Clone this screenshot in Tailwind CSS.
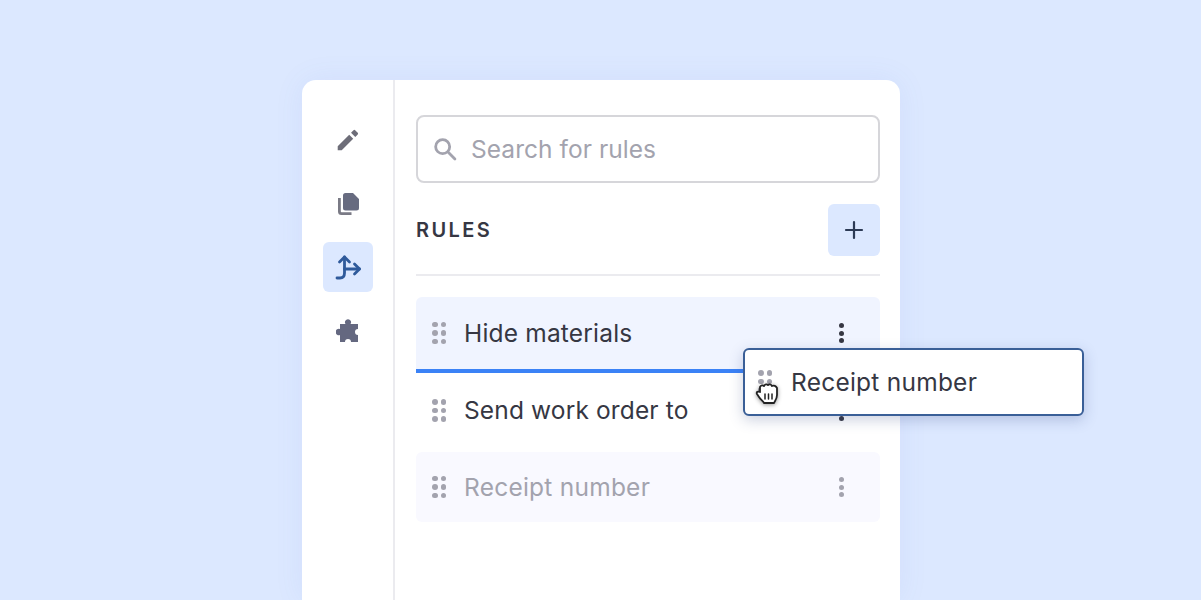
<!DOCTYPE html>
<html lang="en">
<head>
    <meta charset="UTF-8">
    <title>Rules</title>
    <script src="https://cdn.jsdelivr.net/npm/@tailwindcss/browser@4"></script>
</head>
<body class="bg-[#dce8ff] font-[Inter,sans-serif] text-[#363743] h-[600px] w-[1201px] overflow-hidden">
    <div class="relative pt-20 pl-[302px]">
        <!-- Card -->
        <div class="flex w-[598px] h-[520px] bg-white rounded-t-[14px] shadow-[0_0_30px_rgba(90,120,220,0.08)]">
            <!-- Sidebar -->
            <div class="w-[93px] border-r-2 border-[#ebebef] flex flex-col items-center pt-[35px] gap-[13.500px]">
                <div class="w-[50px] h-[50px] flex items-center justify-center">
                    <svg class="w-[26px] h-[26px]" viewBox="0 0 24 24" fill="#6d6d78"><path d="M2.500 17.800V21.500h3.700L16.800 10.900l-3.700-3.700L2.500 17.800zM21 6.900a1.100 1.100 0 0 0 0-1.500l-2.400-2.400a1.100 1.100 0 0 0-1.500 0l-2.300 2.300 3.900 3.900L21 6.900z"/></svg>
                </div>
                <div class="w-[50px] h-[50px] flex items-center justify-center">
                    <svg class="w-[24px] h-[26px]" viewBox="0 0 24 26" fill="#676b80"><path d="M9.500 2h7.500l6 6v9a2.500 2.500 0 0 1-2.500 2.500h-11A2.500 2.500 0 0 1 7 17V4.500A2.500 2.500 0 0 1 9.500 2z"/><path d="M3.400 7v13.500c0 1.200.9 2.100 2.100 2.100H15.500" fill="none" stroke="#7a7a85" stroke-width="2.800"/></svg>
                </div>
                <div class="w-[50px] h-[50px] flex items-center justify-center bg-[#dce8ff] rounded-[6px]">
                    <svg class="w-[28px] h-[28px]" viewBox="0 0 28 28" fill="none" stroke="#2f5a9b" stroke-width="2.800" stroke-linecap="round" stroke-linejoin="round"><path d="M3 25h3c3 0 4.500-2 4.500-5V4"/><path d="M5.500 9l5-5 5 5"/><path d="M10.500 16h15"/><path d="M20.500 11l5 5-5 5"/></svg>
                </div>
                <div class="w-[50px] h-[50px] flex items-center justify-center">
                    <svg class="w-[24px] h-[24px]" viewBox="0 0 24 24" fill="#646880"><path d="M4 5H9.500A3 3 0 1 1 14.500 5H22V10A3 3 0 0 0 22 16V23H15A3 3 0 0 0 9 23H4V16A3.200 3.200 0 1 1 4 10Z"/></svg>
                </div>
            </div>
            <!-- Main -->
            <div class="flex-1 pl-[21px] pr-[20px] pt-[35px]">
                <div class="h-[68px] border-2 border-[#d6d6da] rounded-[8px] flex items-center pl-[13px] gap-[12px]">
                    <svg class="w-[28px] h-[28px]" viewBox="0 0 24 24" fill="none" stroke="#a3a3ae" stroke-width="2.400" stroke-linecap="round"><circle cx="10" cy="10" r="6"/><path d="M15 15l5.500 5.500"/></svg>
                    <span class="text-[24.500px] tracking-[0.05px] pt-[1px] text-[#a3a3ae]">Search for rules</span>
                </div>
                <div class="flex items-center justify-between mt-[21px] pb-[18px] border-b-2 border-[#ebebef]">
                    <span class="text-[20px] font-semibold tracking-[2.400px]">RULES</span>
                    <div class="w-[52px] h-[52px] bg-[#dce8ff] rounded-[6px] flex items-center justify-center">
                        <svg class="w-[20px] h-[20px]" viewBox="0 0 20 20" stroke="#2c3a55" stroke-width="2.200" stroke-linecap="round"><path d="M10 2v16M2 10h16"/></svg>
                    </div>
                </div>
                <div class="mt-[21px] flex flex-col">
                    <div class="h-[72px] bg-[#f0f4ff] rounded-t-[6px] flex items-center pl-[16px] pr-[36px]">
                        <div class="grid grid-cols-2 gap-x-[3px] gap-y-[3px] w-[14px]">
                            <i class="w-[5.500px] h-[5.500px] rounded-full bg-[#a3a3ae]"></i><i class="w-[5.500px] h-[5.500px] rounded-full bg-[#a3a3ae]"></i><i class="w-[5.500px] h-[5.500px] rounded-full bg-[#a3a3ae]"></i><i class="w-[5.500px] h-[5.500px] rounded-full bg-[#a3a3ae]"></i><i class="w-[5.500px] h-[5.500px] rounded-full bg-[#a3a3ae]"></i><i class="w-[5.500px] h-[5.500px] rounded-full bg-[#a3a3ae]"></i>
                        </div>
                        <span class="ml-[18px] text-[24.500px] tracking-[0.19px] flex-1">Hide materials</span>
                        <div class="flex flex-col gap-[2.500px]"><i class="w-[5px] h-[5px] rounded-full bg-[#363743]"></i><i class="w-[5px] h-[5px] rounded-full bg-[#363743]"></i><i class="w-[5px] h-[5px] rounded-full bg-[#363743]"></i></div>
                    </div>
                    <div class="h-[4px] bg-[#3b82f6]"></div>
                    <div class="h-[75px] flex items-center pl-[16px] pr-[36px]">
                        <div class="grid grid-cols-2 gap-x-[3px] gap-y-[3px] w-[14px]">
                            <i class="w-[5.500px] h-[5.500px] rounded-full bg-[#a3a3ae]"></i><i class="w-[5.500px] h-[5.500px] rounded-full bg-[#a3a3ae]"></i><i class="w-[5.500px] h-[5.500px] rounded-full bg-[#a3a3ae]"></i><i class="w-[5.500px] h-[5.500px] rounded-full bg-[#a3a3ae]"></i><i class="w-[5.500px] h-[5.500px] rounded-full bg-[#a3a3ae]"></i><i class="w-[5.500px] h-[5.500px] rounded-full bg-[#a3a3ae]"></i>
                        </div>
                        <span class="ml-[18px] text-[24.500px] tracking-[0.14px] flex-1">Send work order to</span>
                        <div class="flex flex-col gap-[2.500px]"><i class="w-[5px] h-[5px] rounded-full bg-[#363743]"></i><i class="w-[5px] h-[5px] rounded-full bg-[#363743]"></i><i class="w-[5px] h-[5px] rounded-full bg-[#363743]"></i></div>
                    </div>
                    <div class="h-[70px] bg-[#f9f9ff] rounded-[6px] flex items-center pl-[16px] pr-[36px] mt-[4px]">
                        <div class="grid grid-cols-2 gap-x-[3px] gap-y-[3px] w-[14px]">
                            <i class="w-[5.500px] h-[5.500px] rounded-full bg-[#a3a3ae]"></i><i class="w-[5.500px] h-[5.500px] rounded-full bg-[#a3a3ae]"></i><i class="w-[5.500px] h-[5.500px] rounded-full bg-[#a3a3ae]"></i><i class="w-[5.500px] h-[5.500px] rounded-full bg-[#a3a3ae]"></i><i class="w-[5.500px] h-[5.500px] rounded-full bg-[#a3a3ae]"></i><i class="w-[5.500px] h-[5.500px] rounded-full bg-[#a3a3ae]"></i>
                        </div>
                        <span class="ml-[18px] pt-[1px] text-[24.500px] tracking-[0.24px] flex-1 text-[#a3a3ae]">Receipt number</span>
                        <div class="flex flex-col gap-[2.500px]"><i class="w-[5px] h-[5px] rounded-full bg-[#a3a3ae]"></i><i class="w-[5px] h-[5px] rounded-full bg-[#a3a3ae]"></i><i class="w-[5px] h-[5px] rounded-full bg-[#a3a3ae]"></i></div>
                    </div>
                </div>
            </div>
        </div>
        <!-- Dragged item -->
        <div class="absolute left-[743px] top-[348px] w-[341px] h-[68px] bg-white border-2 border-[#3a5f97] rounded-[6px] flex items-center pl-[13px] shadow-[0_4px_14px_rgba(50,70,130,0.25)]">
            <div class="grid grid-cols-2 gap-x-[3px] gap-y-[3px] w-[14px] self-start mt-[20px]">
                <i class="w-[5.500px] h-[5.500px] rounded-full bg-[#a3a3ae]"></i><i class="w-[5.500px] h-[5.500px] rounded-full bg-[#a3a3ae]"></i><i class="w-[5.500px] h-[5.500px] rounded-full bg-[#a3a3ae]"></i><i class="w-[5.500px] h-[5.500px] rounded-full bg-[#a3a3ae]"></i><i class="w-[5.500px] h-[5.500px] rounded-full bg-[#a3a3ae]"></i><i class="w-[5.500px] h-[5.500px] rounded-full bg-[#a3a3ae]"></i>
            </div>
            <span class="ml-[19px] pt-[1px] text-[24.500px] tracking-[0.24px]">Receipt number</span>
            <svg class="absolute left-[10px] top-[32px] w-[25px] h-[24px] drop-shadow-[0_1px_2px_rgba(0,0,0,0.4)]" viewBox="0 0 25 24" stroke-linejoin="round" stroke-linecap="round"><path d="M5 5c1-2 3-2 4-1 1-2 3-2 4-1 1-1 3-1 4 1 2-1 4 0 5 2l0 7c0 4-2 6-3 8l-10 0c-1-2-3-3-5-6l-2-3c-1-2 1-3 3-2z" fill="#fff" stroke="#222" stroke-width="1.800"/><path d="M10 12v5M13.500 12v5M17 12v5" stroke="#222" stroke-width="1.500" fill="none"/></svg>
        </div>
    </div>
</body>
</html>
